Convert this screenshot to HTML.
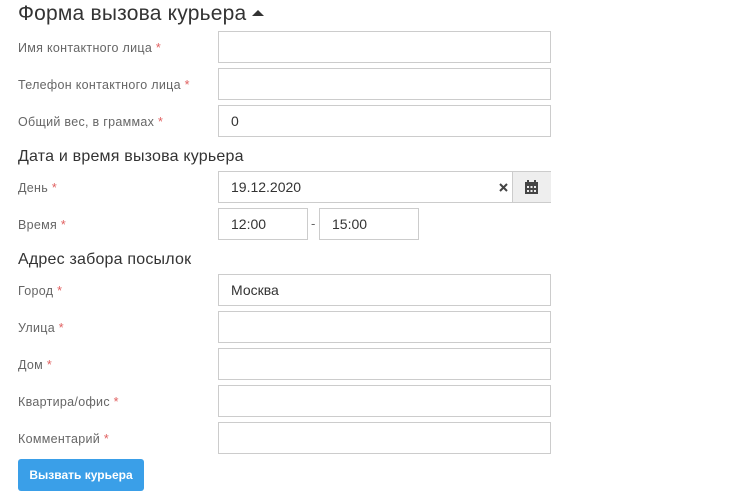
<!DOCTYPE html>
<html><head><meta charset="utf-8"><style>
body{margin:0;width:740px;height:494px;background:#fff;font-family:"Liberation Sans",sans-serif;position:relative;overflow:hidden}
.a{position:absolute}
.h1{left:18px;top:0;font-size:21px;color:#333;line-height:28px;letter-spacing:0.2px}
.h2{left:18px;font-size:16px;color:#333;line-height:20px;letter-spacing:0.2px}
.l{left:18px;font-size:12.5px;color:#666;line-height:16px;letter-spacing:0.3px}
.l b{color:#e06060;font-weight:normal}
.i{left:218px;width:331px;height:30px;border:1px solid #ccc;font-size:14px;color:#333;line-height:30px;box-sizing:content-box}
.i span{padding-left:12px}
</style></head><body>
<div class="a h1">Форма вызова курьера <svg width="12" height="8" viewBox="0 0 12 8" style="vertical-align:3px"><path d="M0 7L6 1L12 7Z" fill="#333"/></svg></div>
<div class="a l" style="top:40px">Имя контактного лица <b>*</b></div>
<div class="a i" style="top:31px"></div>
<div class="a l" style="top:77px">Телефон контактного лица <b>*</b></div>
<div class="a i" style="top:68px"></div>
<div class="a l" style="top:114px">Общий вес, в граммах <b>*</b></div>
<div class="a i" style="top:105px"><span>0</span></div>
<div class="a h2" style="top:147px">Дата и время вызова курьера</div>
<div class="a l" style="top:180px">День <b>*</b></div>
<div class="a i" style="top:171px"><span>19.12.2020</span>
<svg class="a" style="left:280px;top:11px" width="9" height="9" viewBox="0 0 9 9"><path d="M1 1L8 8M8 1L1 8" stroke="#444" stroke-width="2"/></svg>
<div class="a" style="left:293px;top:0;width:38px;height:30px;background:#eee;border-left:1px solid #ccc">
<svg class="a" style="left:12px;top:8px" width="13" height="14" viewBox="0 0 13 14"><rect x="0" y="2" width="13" height="12" fill="#444"/><rect x="2" y="0" width="2" height="3" fill="#444"/><rect x="9" y="0" width="2" height="3" fill="#444"/><g fill="#eee"><rect x="2" y="6" width="2" height="2"/><rect x="5.5" y="6" width="2" height="2"/><rect x="9" y="6" width="2" height="2"/><rect x="2" y="10" width="2" height="2"/><rect x="5.5" y="10" width="2" height="2"/><rect x="9" y="10" width="2" height="2"/></g></svg></div></div>
<div class="a l" style="top:217px">Время <b>*</b></div>
<div class="a i" style="top:208px;width:88px"><span>12:00</span></div>
<div class="a" style="left:311px;top:216px;font-size:13px;color:#666">-</div>
<div class="a i" style="top:208px;left:319px;width:98px"><span>15:00</span></div>
<div class="a h2" style="top:250px">Адрес забора посылок</div>
<div class="a l" style="top:283px">Город <b>*</b></div>
<div class="a i" style="top:274px"><span>Москва</span></div>
<div class="a l" style="top:320px">Улица <b>*</b></div>
<div class="a i" style="top:311px"></div>
<div class="a l" style="top:357px">Дом <b>*</b></div>
<div class="a i" style="top:348px"></div>
<div class="a l" style="top:394px">Квартира/офис <b>*</b></div>
<div class="a i" style="top:385px"></div>
<div class="a l" style="top:431px">Комментарий <b>*</b></div>
<div class="a i" style="top:422px"></div>
<div class="a" style="left:18px;top:459px;width:126px;height:32px;background:#3a9fe8;border-radius:3px;color:#fff;font-weight:bold;font-size:12px;line-height:32px;text-align:center">Вызвать курьера</div>
</body></html>
